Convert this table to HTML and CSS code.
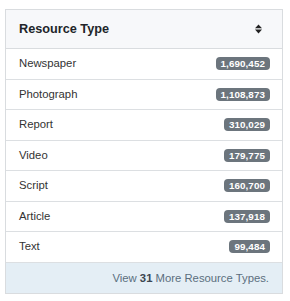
FILE: index.html
```html
<!DOCTYPE html>
<html>
<head>
<meta charset="utf-8">
<link rel="stylesheet" href="styles.css">
</head>
<body>
<div class="card">
  <div class="card-header">
    <span class="title">Resource Type</span>
    <svg class="sort" width="7" height="10" viewBox="0 0 7 10"><path d="M3.5 0.4 L7 4.3 L0 4.3 Z M0 5.6 L7 5.6 L3.5 9.5 Z" fill="#222"/></svg>
  </div>
  <ul class="list">
    <li class="item"><span>Newspaper</span><span class="badge">1,690,452</span></li>
    <li class="item"><span>Photograph</span><span class="badge">1,108,873</span></li>
    <li class="item"><span>Report</span><span class="badge">310,029</span></li>
    <li class="item"><span>Video</span><span class="badge">179,775</span></li>
    <li class="item"><span>Script</span><span class="badge">160,700</span></li>
    <li class="item"><span>Article</span><span class="badge">137,918</span></li>
    <li class="item"><span>Text</span><span class="badge">99,484</span></li>
  </ul>
  <div class="card-footer">View <b>31</b> More Resource Types.</div>
</div>
</body>
</html>
```
FILE: styles.css
```css
html, body { background: #fff; }
body {
  margin: 9px 7px 0 5px;
  font-family: "Liberation Sans", Arial, sans-serif;
  color: #333;
}
.card {
  border: 1px solid #d9dcdf;
  background: #fff;
}
.card-header {
  display: flex;
  align-items: center;
  justify-content: space-between;
  padding: 12px 20px 12px 13px;
  height: 14px;
  background: #f7f8fa;
  border-bottom: 1px solid #d9dcdf;
}
.title {
  font-weight: 700;
  font-size: 12.7px;
  line-height: 14px;
  color: #212529;
}
.sort { display: block; }
.list {
  list-style: none;
  margin: 0;
  padding: 0;
}
.item {
  display: flex;
  align-items: center;
  justify-content: space-between;
  padding: 8px 12px 8px 13px;
  height: 13.5px;
  font-size: 11.3px;
  line-height: 13.5px;
  border-bottom: 1px solid #dcdfe2;
  color: #333;
}
.badge {
  background: #6c757d;
  color: #fff;
  font-weight: 700;
  font-size: 9.8px;
  line-height: 13px;
  height: 13px;
  padding: 0 5px;
  border-radius: 4px;
  letter-spacing: 0.1px;
}
.card-footer {
  background: #e4eef5;
  color: #5b6e7e;
  font-size: 11.3px;
  line-height: 14px;
  padding: 8px 13px 8px 13px;
  text-align: right;
}
.card-footer b { color: #3b4650; }
```
